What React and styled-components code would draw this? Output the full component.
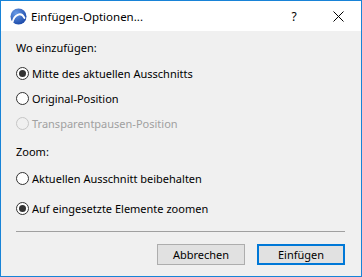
import React from "react";
import styled, { createGlobalStyle } from "styled-components";

const Global = createGlobalStyle`
  html, body { margin: 0; padding: 0; background: #ffffff; }
  body { font-family: "Noto Sans", "Open Sans", sans-serif; }
`;

const Window = styled.div`
  width: 362px;
  height: 277px;
  box-sizing: border-box;
  border: 1px solid #1883d7;
  display: flex;
  flex-direction: column;
  background: #f0f0f0;
  font-family: "Noto Sans", "Open Sans", sans-serif;
  font-size: 11px;
  color: #000;
`;

const TitleBar = styled.div`
  height: 30px;
  background: #ffffff;
  display: flex;
  align-items: center;
  padding-left: 9px;
  padding-top: 1px;
  box-sizing: border-box;
`;

const Title = styled.div`
  margin-left: 4px;
  font-size: 11.5px;
  flex: 1;
`;

const TitleButton = styled.div`
  width: ${(p) => p.$w}px;
  height: 29px;
  display: flex;
  align-items: center;
  justify-content: center;
  font-size: 12px;
`;

const Body = styled.div`
  flex: 1;
  display: flex;
  flex-direction: column;
  padding: 9px 16px 0 15px;
`;

const Label = styled.div`
  height: 16px;
  line-height: 16px;
  margin-top: ${(p) => p.$mt || 0}px;
`;

const RadioRow = styled.div`
  height: 25px;
  display: flex;
  align-items: center;
  gap: 3px;
  margin-top: ${(p) => p.$mt || 0}px;
  color: ${(p) => (p.$disabled ? "#a0a0a0" : "#000")};
`;

const Circle = styled.span`
  width: 13px;
  height: 13px;
  box-sizing: border-box;
  border-radius: 50%;
  border: 1px solid ${(p) => (p.$disabled ? "#c6c6c6" : "#333333")};
  background: ${(p) => (p.$disabled ? "#f0f0f0" : "#ffffff")};
  display: flex;
  align-items: center;
  justify-content: center;
  flex-shrink: 0;
  &::after {
    content: "";
    width: 7px;
    height: 7px;
    border-radius: 50%;
    background: #333333;
    display: ${(p) => (p.$checked ? "block" : "none")};
  }
`;

const Separator = styled.div`
  height: 1px;
  background: #a0a0a0;
  margin-top: 10px;
`;

const ButtonRow = styled.div`
  display: flex;
  justify-content: flex-end;
  gap: 12px;
  margin-top: 12px;
`;

const Button = styled.div`
  width: 88px;
  height: 21px;
  box-sizing: border-box;
  background: #e1e1e1;
  border: ${(p) => (p.$default ? "2px solid #0078d7" : "1px solid #adadad")};
  display: flex;
  align-items: center;
  justify-content: center;
  font-size: 11px;
`;

const Radio = ({ label, checked, disabled, mt }) => (
  <RadioRow $disabled={disabled} $mt={mt}>
    <Circle $checked={checked} $disabled={disabled} />
    <span>{label}</span>
  </RadioRow>
);

const Logo = () => (
  <svg width="17" height="17" viewBox="0 0 17 17">
    <defs>
      <radialGradient id="lg" cx="35%" cy="30%" r="75%">
        <stop offset="0%" stopColor="#6a9be6" />
        <stop offset="100%" stopColor="#1a48a8" />
      </radialGradient>
    </defs>
    <circle cx="8.5" cy="8.5" r="8" fill="url(#lg)" />
    <path d="M2.5 14.5 C4 7, 11 3, 14.5 10" stroke="#fff" strokeWidth="1.8" fill="none" strokeLinecap="round" />
  </svg>
);

export default function App() {
  return (
    <>
      <Global />
      <Window>
        <TitleBar>
          <Logo />
          <Title>Einfügen-Optionen...</Title>
          <TitleButton $w={42}>?</TitleButton>
          <TitleButton $w={46}>
            <svg width="11" height="11" viewBox="0 0 11 11">
              <path d="M0.5 0.5 L10.5 10.5 M10.5 0.5 L0.5 10.5" stroke="#000" strokeWidth="1" />
            </svg>
          </TitleButton>
        </TitleBar>
        <Body>
          <Label>Wo einzufügen:</Label>
          <Radio label="Mitte des aktuellen Ausschnitts" checked mt={5} />
          <Radio label="Original-Position" />
          <Radio label="Transparentpausen-Position" disabled />
          <Label $mt={8}>Zoom:</Label>
          <Radio label="Aktuellen Ausschnitt beibehalten" mt={6} />
          <Radio label="Auf eingesetzte Elemente zoomen" checked mt={5} />
          <Separator />
          <ButtonRow>
            <Button>Abbrechen</Button>
            <Button $default>Einfügen</Button>
          </ButtonRow>
        </Body>
      </Window>
    </>
  );
}
